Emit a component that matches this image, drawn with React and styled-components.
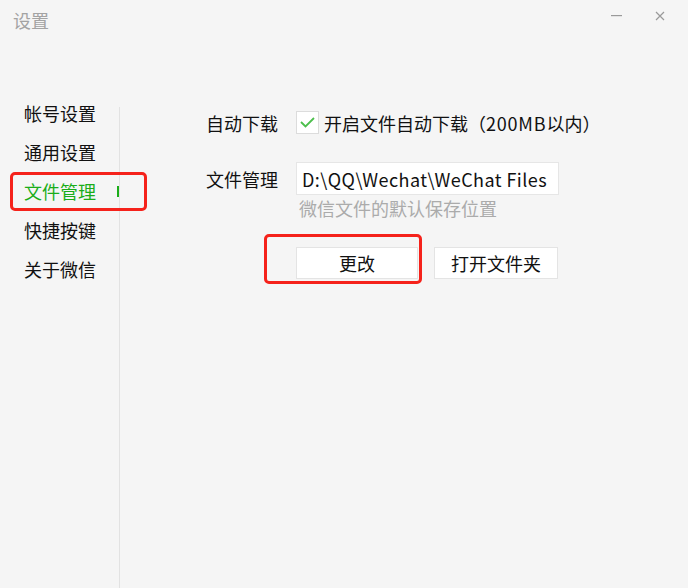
import React from "react";
import styled, { createGlobalStyle } from "styled-components";

const Global = createGlobalStyle`
  html, body { margin: 0; padding: 0; background: #f5f5f5; }
  body { font-family: "Microsoft YaHei", "Noto Sans CJK SC", "Noto Sans", sans-serif; }
  * { box-sizing: border-box; }
`;

const Window = styled.div`
  width: 688px;
  height: 588px;
  background: #f5f5f5;
  display: flex;
  flex-direction: column;
  overflow: hidden;
`;

const TitleBar = styled.div`
  height: 40px;
  display: flex;
  align-items: center;
  padding: 0 16px 0 13px;
`;

const Title = styled.div`
  flex: 1;
  font-size: 18px;
  line-height: 22px;
  color: #a3a3a3;
`;

const WinButton = styled.div`
  width: 24px;
  height: 24px;
  display: flex;
  align-items: center;
  justify-content: center;
  margin-left: ${(p) => p.$gap || 0}px;
  margin-top: -8px;
`;

const Body = styled.div`
  flex: 1;
  display: flex;
  padding-top: 53px;
`;

const Nav = styled.div`
  width: 119px;
  display: flex;
  flex-direction: column;
`;

const NavItem = styled.div`
  position: relative;
  height: 39px;
  display: flex;
  align-items: center;
  justify-content: space-between;
  padding-left: 24px;
  font-size: 18px;
  color: ${(p) => (p.$active ? "#1aad19" : "#111")};
`;

const Marker = styled.span`
  width: 2px;
  height: 11px;
  background: #1aad19;
  margin-top: 2px;
`;

const Highlight = styled.div`
  position: absolute;
  left: 10px;
  top: 1px;
  width: 137px;
  height: 39px;
  border: 3px solid #f5221b;
  border-radius: 5px;
  pointer-events: none;
`;

const Divider = styled.div`
  width: 1px;
  margin-top: 14px;
  background: #e2e2e2;
`;

const Content = styled.div`
  flex: 1;
  padding: 18px 0 0 86px;
  display: flex;
  flex-direction: column;
`;

const Row = styled.div`
  display: flex;
  align-items: center;
  margin-top: ${(p) => p.$top || 0}px;
`;

const Label = styled.div`
  width: 90px;
  font-size: 18px;
  line-height: 22px;
  color: #111;
`;

const CheckBox = styled.div`
  width: 23px;
  height: 23px;
  background: #fff;
  border: 1px solid #dcdcdc;
  display: flex;
  align-items: center;
  justify-content: center;
`;

const CheckText = styled.div`
  margin-left: 5px;
  font-size: 18px;
  line-height: 22px;
  color: #111;
  white-space: nowrap;
`;

const Latin = styled.span`
  letter-spacing: 0.8px;
`;

const PathBox = styled.div`
  width: 263px;
  height: 33px;
  background: #fff;
  border: 1px solid #e6e6e6;
  padding-left: 5px;
  display: flex;
  align-items: center;
  font-size: 18px;
  letter-spacing: 0.45px;
  color: #111;
  white-space: nowrap;
  overflow: hidden;
`;

const Hint = styled.div`
  margin: 2px 0 0 93px;
  font-size: 18px;
  line-height: 22px;
  color: #ababab;
`;

const Buttons = styled.div`
  display: flex;
  gap: 16px;
  margin: 28px 0 0 90px;
`;

const ButtonWrap = styled.div`
  position: relative;
`;

const Button = styled.div`
  width: ${(p) => p.$w}px;
  height: 32px;
  background: #fff;
  border: 1px solid #e4e4e4;
  display: flex;
  align-items: center;
  justify-content: center;
  font-size: 18px;
  color: #111;
`;

const ButtonHighlight = styled.div`
  position: absolute;
  left: -32px;
  top: -13px;
  width: 158px;
  height: 50px;
  border: 3px solid #f5221b;
  border-radius: 5px;
  pointer-events: none;
`;

export default function App() {
  const items = ["帐号设置", "通用设置", "文件管理", "快捷按键", "关于微信"];
  return (
    <Window>
      <Global />
      <TitleBar>
        <Title>设置</Title>
        <WinButton>
          <svg width="12" height="2" viewBox="0 0 12 2">
            <rect x="0" y="0" width="11" height="1.2" fill="#9a9a9a" />
          </svg>
        </WinButton>
        <WinButton $gap={19}>
          <svg width="10" height="10" viewBox="0 0 10 10">
            <path d="M1 1 L9 9 M9 1 L1 9" stroke="#9a9a9a" strokeWidth="1.2" />
          </svg>
        </WinButton>
      </TitleBar>
      <Body>
        <Nav>
          {items.map((t) => (
            <NavItem key={t} $active={t === "文件管理"}>
              {t}
              {t === "文件管理" && <Marker />}
              {t === "文件管理" && <Highlight />}
            </NavItem>
          ))}
        </Nav>
        <Divider />
        <Content>
          <Row>
            <Label>自动下载</Label>
            <CheckBox>
              <svg width="15" height="11" viewBox="0 0 15 11">
                <path d="M1 5 L5.5 9.5 L14 1" fill="none" stroke="#4cbf4c" strokeWidth="1.8" />
              </svg>
            </CheckBox>
            <CheckText>
              开启文件自动下载（<Latin>200MB</Latin>以内）
            </CheckText>
          </Row>
          <Row $top={28}>
            <Label>文件管理</Label>
            <PathBox>D:\QQ\Wechat\WeChat Files</PathBox>
          </Row>
          <Hint>微信文件的默认保存位置</Hint>
          <Buttons>
            <ButtonWrap>
              <Button $w={122}>更改</Button>
              <ButtonHighlight />
            </ButtonWrap>
            <Button $w={124}>打开文件夹</Button>
          </Buttons>
        </Content>
      </Body>
    </Window>
  );
}
